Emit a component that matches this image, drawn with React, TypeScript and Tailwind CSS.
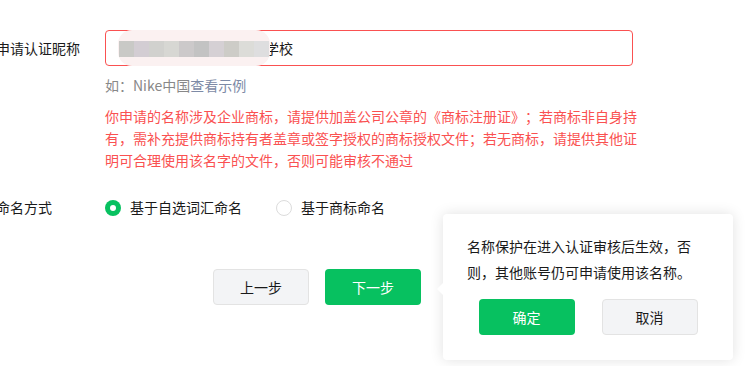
const font = { fontFamily: '"Noto Sans CJK SC", "Noto Sans", sans-serif' };

// pixelated blur over the entered nickname
const mosaic = ["#c9c9c6", "#d3cdd3", "#d1d1ce", "#d7d7d3", "#ccc9ca", "#c3c3c3", "#d5d0d4", "#cdccc7", "#dcdcd8", "#dededf"];

function Radio({ checked, label }: { checked?: boolean; label: string }) {
  return (
    <label className="flex items-center gap-[9px] text-[14px] text-[#1a1a1a]">
      {checked ? (
        <span className="flex h-4 w-4 items-center justify-center rounded-full bg-[#07c160]">
          <span className="h-[6px] w-[6px] rounded-full bg-white" />
        </span>
      ) : (
        <span className="h-4 w-4 rounded-full border border-[#dcdcdc] bg-white" />
      )}
      {label}
    </label>
  );
}

export default function App() {
  return (
    <div className="relative h-[366px] w-[746px] overflow-hidden bg-white [text-spacing-trim:space-all]" style={font}>
      <div className="ml-[-4px] pt-[30px]">
        {/* nickname */}
        <div className="flex items-center">
          <div className="w-[109px] text-[14px] text-[#1a1a1a]">申请认证昵称</div>
          <div className="flex h-[36px] w-[528px] items-center rounded-[4px] border border-[#fa5151] pl-[12px] text-[14px] text-[#1a1a1a]">
            <span className="relative z-10 flex h-[36px] items-center rounded-[14px] bg-[#fbf1f1] px-[1px] pt-[2px]">
              {mosaic.map((c, i) => (
                <span key={i} className="h-[16px] w-[15px]" style={{ background: c }} />
              ))}
            </span>
            <span className="ml-[-5px]">学校</span>
          </div>
        </div>
        <div className="ml-[109px] mt-[9px] text-[14px] leading-[20px] text-[#888]">
          如：Nike中国<span className="text-[#7d8aa6]">查看示例</span>
        </div>
        <div className="ml-[109px] mt-[10px] w-[560px] text-[14px] leading-[22px] text-[#fa5151]">
          你申请的名称涉及企业商标，请提供加盖公司公章的《商标注册证》；若商标非自身持
          <br />
          有，需补充提供商标持有者盖章或签字授权的商标授权文件；若无商标，请提供其他证
          <br />
          明可合理使用该名字的文件，否则可能审核不通过
        </div>

        {/* naming method */}
        <div className="mt-[26px] flex items-center">
          <div className="w-[109px] text-[14px] text-[#1a1a1a]">命名方式</div>
          <div className="flex items-center gap-[34px]">
            <Radio checked label="基于自选词汇命名" />
            <Radio label="基于商标命名" />
          </div>
        </div>

        <div className="ml-[217px] mt-[51px] flex gap-[16px]">
          <button className="h-[36px] w-[96px] rounded-[4px] border border-[#e3e3e3] bg-[#f3f4f6] text-[14px] text-[#1a1a1a]">
            上一步
          </button>
          <button className="h-[36px] w-[96px] rounded-[4px] bg-[#07c160] text-[14px] text-white">下一步</button>
        </div>
      </div>

      {/* confirm popover */}
      <div className="absolute left-[443px] top-[214px] w-[290px] rounded-[4px] bg-white px-[24px] pb-[25px] pt-[19px] shadow-[0_0_14px_rgba(0,0,0,0.12)]">
        <span className="absolute left-[-6px] top-[68px] h-0 w-0 border-y-[7px] border-r-[7px] border-y-transparent border-r-white" />
        <p className="w-[230px] text-[14px] leading-[26px] text-[#1a1a1a]">
          名称保护在进入认证审核后生效，否则，其他账号仍可申请使用该名称。
        </p>
        <div className="mt-[14px] flex justify-center gap-[27px]">
          <button className="h-[36px] w-[96px] rounded-[4px] bg-[#07c160] text-[14px] text-white">确定</button>
          <button className="h-[36px] w-[96px] rounded-[4px] border border-[#e3e3e3] bg-[#f3f4f6] text-[14px] text-[#1a1a1a]">
            取消
          </button>
        </div>
      </div>
    </div>
  );
}
